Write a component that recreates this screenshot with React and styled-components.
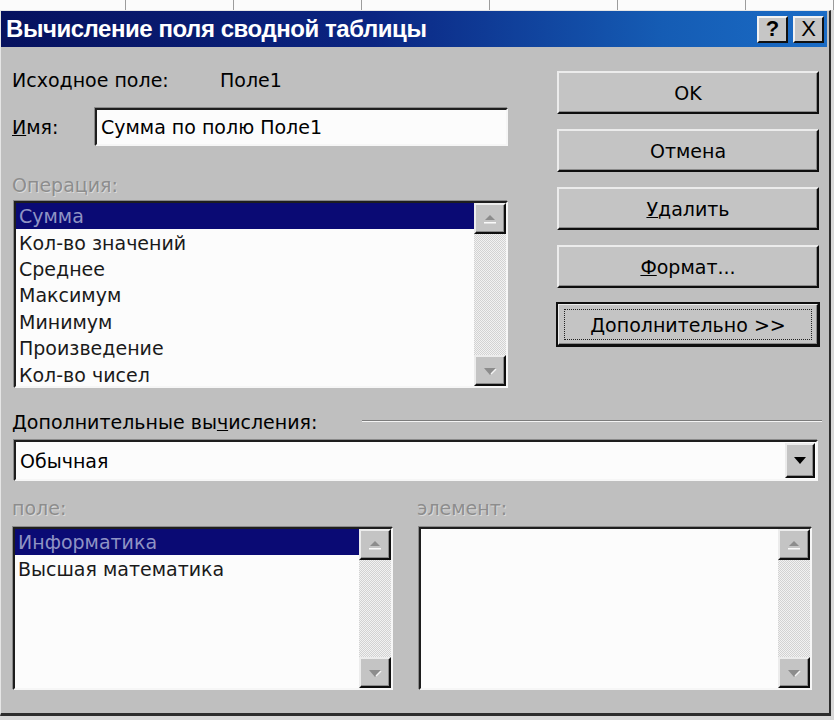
import React from 'react';
import styled, { createGlobalStyle, css } from 'styled-components';

const Global = createGlobalStyle`
  html, body { margin: 0; padding: 0; background: #d8d8d8; }
  body { font-family: "DejaVu Sans", "Liberation Sans", Arial, sans-serif; }
  * { box-sizing: border-box; }
`;

const Screen = styled.div`
  width: 834px;
  height: 720px;
  overflow: hidden;
  display: flex;
  flex-direction: column;
  background: #d8d8d8;
`;

const Sheet = styled.div`
  display: flex;
  height: 10px;
  flex: 0 0 10px;
  background: #fbfbfb;
`;

const SheetCell = styled.div`
  flex: 0 0 ${(p) => p.$w}px;
  border-right: 1px solid #9c9c9c;
`;

const Dialog = styled.div`
  width: 831px;
  height: 706px;
  flex: 0 0 706px;
  background: #bfbfbf;
  border-top: 1px solid #e6e6e6;
  border-left: 1px solid #e6e6e6;
  border-right: 2px solid #2c2c2c;
  border-bottom: 3px solid #2c2c2c;
  display: flex;
  flex-direction: column;
`;

const TitleBar = styled.div`
  height: 36px;
  flex: 0 0 36px;
  margin-right: 2px;
  display: flex;
  align-items: center;
  padding: 0 3px 0 5px;
  background: linear-gradient(90deg, #06115e 0%, #0b2582 45%, #155cb4 80%, #1a6cc6 100%);
`;

const Title = styled.div`
  flex: 1;
  color: #fff;
  font-family: "Liberation Sans", Arial, sans-serif;
  font-weight: bold;
  font-size: 24px;
  letter-spacing: -0.45px;
  white-space: nowrap;
`;

const TitleButtons = styled.div`
  display: flex;
  gap: 5px;
`;

const CaptionButton = styled.div`
  width: 31px;
  height: 27px;
  background: #c6c6c6;
  border-top: 2px solid #f2f2f2;
  border-left: 2px solid #f2f2f2;
  border-right: 2px solid #111;
  border-bottom: 2px solid #111;
  display: flex;
  align-items: center;
  justify-content: center;
  font-family: "Liberation Sans", Arial, sans-serif;
  font-size: 22px;
  font-weight: ${(p) => (p.$bold ? 'bold' : 'normal')};
  color: #000;
  line-height: 1;
`;

const Body = styled.div`
  flex: 1;
  display: flex;
  flex-direction: column;
  padding: 0 10px 0 11px;
  font-size: 19px;
  color: #000;
`;

const TopSection = styled.div`
  display: flex;
  gap: 49px;
`;

const LeftCol = styled.div`
  width: 496px;
  display: flex;
  flex-direction: column;
`;

const RightCol = styled.div`
  width: 262px;
  display: flex;
  flex-direction: column;
  gap: 15px;
  padding-top: 24px;
`;

const InfoRow = styled.div`
  margin-top: 21px;
  height: 24px;
  display: flex;
  align-items: center;
`;

const FieldLabel = styled.div`
  width: ${(p) => p.$w}px;
  flex: 0 0 ${(p) => p.$w}px;
  white-space: nowrap;
`;

const NameRow = styled.div`
  margin-top: 16px;
  height: 38px;
  display: flex;
  align-items: center;
`;

const sunken = css`
  border-top: 2px solid #1e1e1e;
  border-left: 2px solid #1e1e1e;
  border-right: 2px solid #f6f6f6;
  border-bottom: 2px solid #f6f6f6;
  box-shadow: -1px -1px 0 #8a8a8a;
`;

const TextInput = styled.div`
  ${sunken};
  flex: 1;
  height: 38px;
  background: #fcfcfc;
  display: flex;
  align-items: center;
  padding-left: 4px;
  white-space: nowrap;
`;

const SectionLabel = styled.div`
  margin-top: ${(p) => p.$mt || 0}px;
  height: 24px;
  display: flex;
  align-items: center;
  white-space: nowrap;
  color: ${(p) => (p.$disabled ? '#8d8d8d' : '#000')};
  text-shadow: ${(p) => (p.$disabled ? '1px 1px 0 #dadada' : 'none')};
`;

const ListBox = styled.div`
  ${sunken};
  margin-top: ${(p) => p.$mt}px;
  margin-left: ${(p) => p.$ml}px;
  width: ${(p) => p.$w}px;
  height: ${(p) => p.$h}px;
  background: #fcfcfc;
  display: flex;
`;

const Items = styled.div`
  flex: 1;
  display: flex;
  flex-direction: column;
  min-width: 0;
`;

const Item = styled.div`
  height: 26.4px;
  flex: 0 0 26.4px;
  display: flex;
  align-items: center;
  padding-left: 3px;
  white-space: nowrap;
  color: ${(p) => (p.$selected ? '#8f93c4' : '#1a1a1a')};
  background: ${(p) => (p.$selected ? '#0a0a74' : 'transparent')};
`;

const ScrollBar = styled.div`
  width: 32px;
  flex: 0 0 32px;
  display: flex;
  flex-direction: column;
  background-color: #e4e4e4;
  background-image: repeating-conic-gradient(#d2d2d2 0 25%, #f2f2f2 0 50%);
  background-size: 2px 2px;
`;

const ScrollTrack = styled.div`
  flex: 1;
`;

const raised = css`
  background: #c4c4c4;
  border-top: 2px solid #ececec;
  border-left: 2px solid #ececec;
  border-right: 2px solid #0e0e0e;
  border-bottom: 2px solid #0e0e0e;
  box-shadow: inset -1px -1px 0 #8a8a8a;
`;

const ScrollButton = styled.div`
  ${raised};
  height: 31px;
  flex: 0 0 31px;
  display: flex;
  align-items: center;
  justify-content: center;
`;

const Button = styled.div`
  ${raised};
  position: relative;
  height: 43px;
  display: flex;
  align-items: center;
  justify-content: center;
  white-space: nowrap;
  ${(p) =>
    p.$default &&
    css`
      outline: 2px solid #0e0e0e;
      outline-offset: -1px;
      &::after {
        content: '';
        position: absolute;
        inset: 4px 5px 4px 5px;
        border: 1px dotted #222;
      }
    `}
`;

const SeparatorRow = styled.div`
  margin-top: 22px;
  height: 24px;
  display: flex;
  align-items: center;
`;

const EtchedLine = styled.div`
  flex: 1;
  margin-left: 45px;
  margin-right: -3px;
  margin-top: -2px;
  border-top: 1px solid #7c7c7c;
  border-bottom: 1px solid #f4f4f4;
`;

const Combo = styled.div`
  ${sunken};
  margin: 6px 1px 0 2px;
  height: 41px;
  background: #fcfcfc;
  display: flex;
  align-items: center;
`;

const ComboText = styled.div`
  flex: 1;
  padding-left: 4px;
`;

const ComboButton = styled.div`
  ${raised};
  width: 30px;
  height: 35px;
  margin-right: 1px;
  display: flex;
  align-items: center;
  justify-content: center;
`;

const BottomSection = styled.div`
  display: grid;
  grid-template-columns: 381px 1fr;
  column-gap: 24px;
  margin-top: 15px;
`;

const BottomCol = styled.div`
  display: flex;
  flex-direction: column;
`;

const ArrowUp = () => (
  <svg width="16" height="12" viewBox="0 0 16 12">
    <polygon points="3,7 8,2 13,7" fill="#8c8c8c" />
    <rect x="2" y="9" width="12" height="1.5" fill="#fafafa" />
  </svg>
);

const ArrowDown = () => (
  <svg width="16" height="12" viewBox="0 0 16 12">
    <polygon points="2,3 14,3 8,10" fill="#8c8c8c" />
    <polyline points="9,9 14,4" stroke="#f4f4f4" strokeWidth="1.5" fill="none" />
  </svg>
);

const ArrowDownBlack = () => (
  <svg width="14" height="9" viewBox="0 0 14 9">
    <polygon points="1,1 13,1 7,8" fill="#000" />
  </svg>
);

const List = ({ items, selected, w, h, mt, ml }) => (
  <ListBox $w={w} $h={h} $mt={mt} $ml={ml}>
    <Items>
      {items.map((it, i) => (
        <Item key={it} $selected={i === selected}>
          {it}
        </Item>
      ))}
    </Items>
    <ScrollBar>
      <ScrollButton>
        <ArrowUp />
      </ScrollButton>
      <ScrollTrack />
      <ScrollButton>
        <ArrowDown />
      </ScrollButton>
    </ScrollBar>
  </ListBox>
);

const operations = [
  'Сумма',
  'Кол-во значений',
  'Среднее',
  'Максимум',
  'Минимум',
  'Произведение',
  'Кол-во чисел',
];

const sheetCols = [126, 108, 128, 128, 128, 128, 88];

export default function App() {
  return (
    <Screen>
      <Global />
      <Sheet>
        {sheetCols.map((w, i) => (
          <SheetCell key={i} $w={w} />
        ))}
      </Sheet>
      <Dialog>
        <TitleBar>
          <Title>Вычисление поля сводной таблицы</Title>
          <TitleButtons>
            <CaptionButton $bold>?</CaptionButton>
            <CaptionButton>X</CaptionButton>
          </TitleButtons>
        </TitleBar>
        <Body>
          <TopSection>
            <LeftCol>
              <InfoRow>
                <FieldLabel $w={208}>Исходное поле:</FieldLabel>
                <div>Поле1</div>
              </InfoRow>
              <NameRow>
                <FieldLabel $w={83}>
                  <u>И</u>мя:
                </FieldLabel>
                <TextInput>Сумма по полю Поле1</TextInput>
              </NameRow>
              <SectionLabel $mt={27} $disabled>
                Операция:
              </SectionLabel>
              <List items={operations} selected={0} w={494} h={187} mt={4} ml={2} />
            </LeftCol>
            <RightCol>
              <Button>OK</Button>
              <Button>Отмена</Button>
              <Button>
                <u>У</u>далить
              </Button>
              <Button>
                <u>Ф</u>ормат...
              </Button>
              <Button $default>
                <u>Д</u>ополнительно &gt;&gt;
              </Button>
            </RightCol>
          </TopSection>
          <SeparatorRow>
            <div>
              Дополнительные вы<u>ч</u>исления:
            </div>
            <EtchedLine />
          </SeparatorRow>
          <Combo>
            <ComboText>Обычная</ComboText>
            <ComboButton>
              <ArrowDownBlack />
            </ComboButton>
          </Combo>
          <BottomSection>
            <BottomCol>
              <SectionLabel $disabled>поле:</SectionLabel>
              <List
                items={['Информатика', 'Высшая математика']}
                selected={0}
                w={380}
                h={163}
                mt={7}
                ml={1}
              />
            </BottomCol>
            <BottomCol>
              <SectionLabel $disabled>элемент:</SectionLabel>
              <List items={[]} selected={-1} w={393} h={163} mt={7} ml={2} />
            </BottomCol>
          </BottomSection>
        </Body>
      </Dialog>
    </Screen>
  );
}
